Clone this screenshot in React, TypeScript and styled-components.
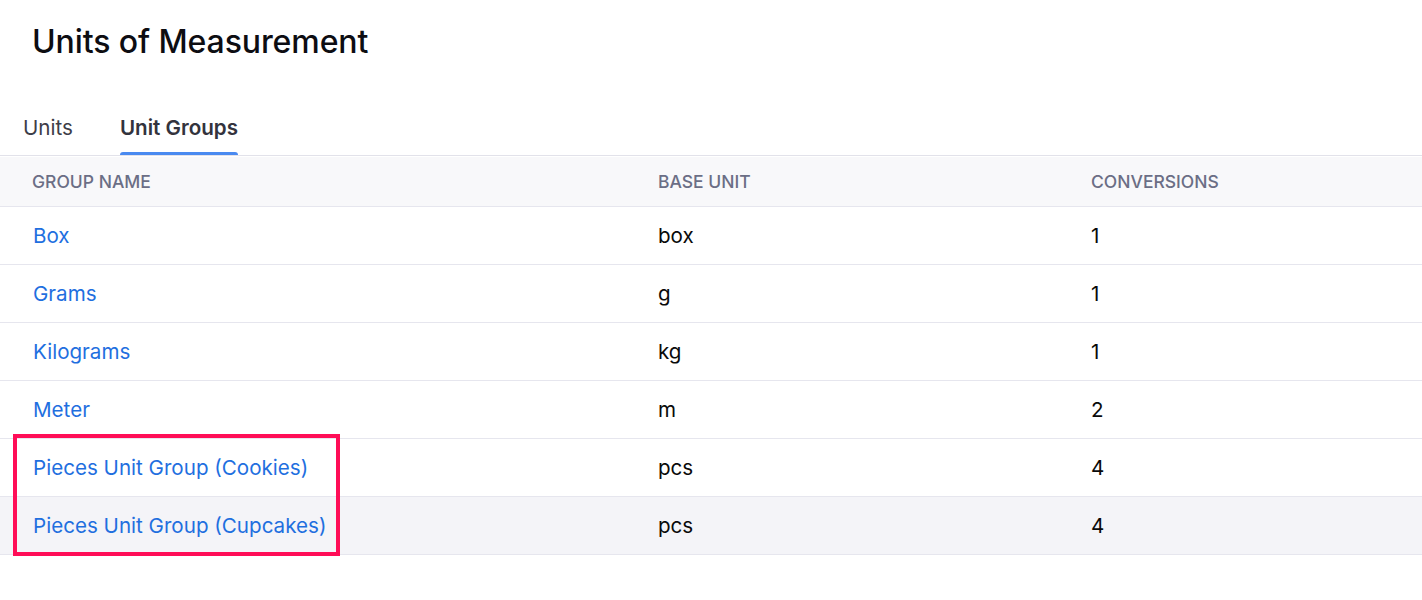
import React from "react";
import styled, { createGlobalStyle } from "styled-components";

const Global = createGlobalStyle`
  html, body { margin: 0; padding: 0; background: #ffffff; }
  body { font-family: Inter, "Noto Sans", sans-serif; color: #000; }
`;

const Page = styled.div`
  display: flex;
  flex-direction: column;
  width: 1422px;
  min-height: 600px;
  background: #fff;
`;

const Title = styled.h1`
  margin: 0;
  padding: 22px 32px 0;
  font-size: 32px;
  line-height: 40px;
  font-weight: 500;
  color: #0d0d12;
  letter-spacing: -0.1px;
`;

const TabBar = styled.div`
  display: flex;
  gap: 47px;
  margin-top: 54px;
  padding-left: 23px;
  border-bottom: 1px solid #e2e2ea;
`;

const Tab = styled.div<{ $active?: boolean }>`
  position: relative;
  font-size: 20.6px;
  line-height: 24px;
  padding-bottom: 15px;
  font-weight: ${(p) => (p.$active ? 600 : 400)};
  color: ${(p) => (p.$active ? "#33333d" : "#3d3d48")};
  &::after {
    content: "";
    display: ${(p) => (p.$active ? "block" : "none")};
    position: absolute;
    left: 0;
    right: 0;
    bottom: 0;
    height: 3px;
    border-radius: 3px 3px 0 0;
    background: #4a8af0;
  }
`;

const Table = styled.div`
  position: relative;
  display: flex;
  flex-direction: column;
  margin-top: 1px;
`;

const Row = styled.div<{ $head?: boolean; $hover?: boolean }>`
  display: grid;
  grid-template-columns: 626px 433px 1fr;
  align-items: center;
  height: ${(p) => (p.$head ? "49px" : "57px")};
  background: ${(p) => (p.$head ? "#f8f8fa" : p.$hover ? "#f4f4f8" : "#fff")};
  border-bottom: 1px solid #e6e6ee;
`;

const HeadCell = styled.div`
  padding-left: 32px;
  font-size: 17.5px;
  font-weight: 500;
  color: #6b6e85;
  text-transform: uppercase;
  letter-spacing: 0;
`;

const Cell = styled.div`
  padding-left: 32px;
  font-size: 20.6px;
  color: #0a0a0a;
`;

const LinkCell = styled(Cell)`
  padding-left: 33px;
  color: #1f6fdf;
`;

const Highlight = styled.div`
  position: absolute;
  left: 13px;
  top: 277px;
  width: 319px;
  height: 114px;
  border: 4px solid #ff0d57;
  pointer-events: none;
`;

const rows = [
  { name: "Box", base: "box", conv: "1" },
  { name: "Grams", base: "g", conv: "1" },
  { name: "Kilograms", base: "kg", conv: "1" },
  { name: "Meter", base: "m", conv: "2" },
  { name: "Pieces Unit Group (Cookies)", base: "pcs", conv: "4" },
  { name: "Pieces Unit Group (Cupcakes)", base: "pcs", conv: "4", hover: true },
];

export default function App() {
  return (
    <Page>
      <Global />
      <Title>Units of Measurement</Title>
      <TabBar>
        <Tab>Units</Tab>
        <Tab $active>Unit Groups</Tab>
      </TabBar>
      <Table>
        <Row $head>
          <HeadCell>Group Name</HeadCell>
          <HeadCell>Base Unit</HeadCell>
          <HeadCell>Conversions</HeadCell>
        </Row>
        {rows.map((r) => (
          <Row key={r.name} $hover={r.hover}>
            <LinkCell>{r.name}</LinkCell>
            <Cell>{r.base}</Cell>
            <Cell>{r.conv}</Cell>
          </Row>
        ))}
        <Highlight />
      </Table>
    </Page>
  );
}
